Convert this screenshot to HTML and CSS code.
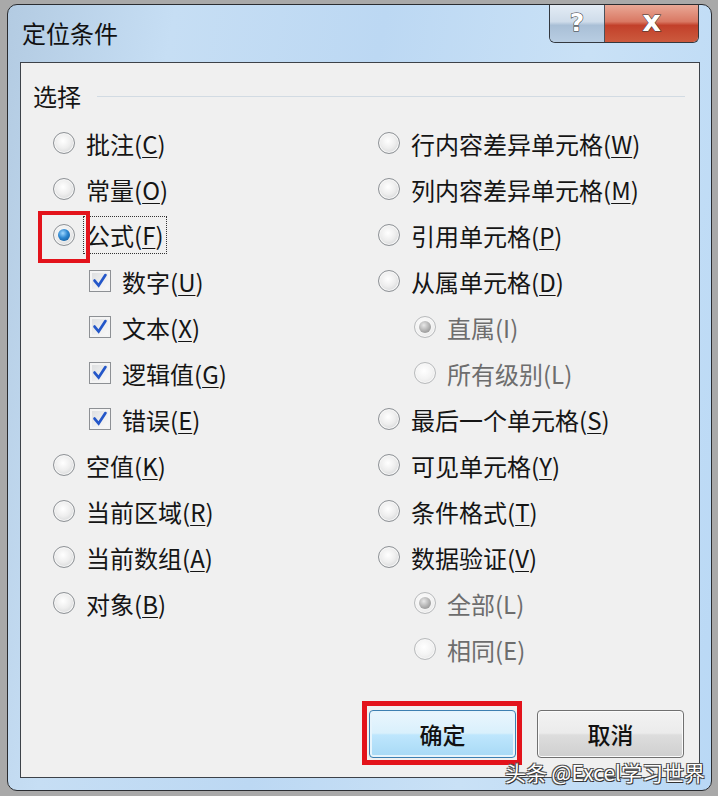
FILE: index.html
```html
<!DOCTYPE html>
<html lang="zh-CN">

	<head>
		<meta charset="UTF-8">
		<meta name="viewport" content="width=device-width, initial-scale=1.0">
		<title>定位条件</title>
		<link rel="stylesheet" href="styles.css">
	</head>

	<body>
		<div class="window">
			<div class="titlebar">
				<span class="title">定位条件</span>
				<div class="caption">
					<span class="cbtn help">?</span>
					<span class="cbtn close">x</span>
				</div>
			</div>
			<div class="content">
				<div class="group-head"><span>选择</span><i></i></div>
				<div class="cols">
					<ul class="col">
						<li><span class="radio"></span><label>批注(<u>C</u>)</label></li>
						<li><span class="radio"></span><label>常量(<u>O</u>)</label></li>
						<li><span class="radio on mark"></span><label class="focus">公式(<u>F</u>)</label></li>
						<li class="sub"><span class="check"><svg viewBox="0 0 22 22"><path d="M5 10.5 L9.5 16 L17 4.5" /></svg></span><label>数字(<u>U</u>)</label></li>
						<li class="sub"><span class="check"><svg viewBox="0 0 22 22"><path d="M5 10.5 L9.5 16 L17 4.5" /></svg></span><label>文本(<u>X</u>)</label></li>
						<li class="sub"><span class="check"><svg viewBox="0 0 22 22"><path d="M5 10.5 L9.5 16 L17 4.5" /></svg></span><label>逻辑值(<u>G</u>)</label></li>
						<li class="sub"><span class="check"><svg viewBox="0 0 22 22"><path d="M5 10.5 L9.5 16 L17 4.5" /></svg></span><label>错误(<u>E</u>)</label></li>
						<li><span class="radio"></span><label>空值(<u>K</u>)</label></li>
						<li><span class="radio"></span><label>当前区域(<u>R</u>)</label></li>
						<li><span class="radio"></span><label>当前数组(<u>A</u>)</label></li>
						<li><span class="radio"></span><label>对象(<u>B</u>)</label></li>
					</ul>
					<ul class="col">
						<li><span class="radio"></span><label>行内容差异单元格(<u>W</u>)</label></li>
						<li><span class="radio"></span><label>列内容差异单元格(<u>M</u>)</label></li>
						<li><span class="radio"></span><label>引用单元格(<u>P</u>)</label></li>
						<li><span class="radio"></span><label>从属单元格(<u>D</u>)</label></li>
						<li class="sub off"><span class="radio on"></span><label>直属(I)</label></li>
						<li class="sub off"><span class="radio"></span><label>所有级别(L)</label></li>
						<li><span class="radio"></span><label>最后一个单元格(<u>S</u>)</label></li>
						<li><span class="radio"></span><label>可见单元格(<u>Y</u>)</label></li>
						<li><span class="radio"></span><label>条件格式(<u>T</u>)</label></li>
						<li><span class="radio"></span><label>数据验证(<u>V</u>)</label></li>
						<li class="sub off"><span class="radio on"></span><label>全部(L)</label></li>
						<li class="sub off"><span class="radio"></span><label>相同(E)</label></li>
					</ul>
				</div>
				<div class="buttons">
					<a href="javascript:;" class="btn ok mark">确定</a>
					<a href="javascript:;" class="btn">取消</a>
				</div>
			</div>
			<div class="watermark">头条 @Excel学习世界</div>
		</div>
	</body>

</html>
```

FILE: styles.css
```css
* {
	margin: 0;
	padding: 0;
	list-style: none;
	box-sizing: border-box;
}

body {
	width: 718px;
	height: 796px;
	background: #a9a9a9;
	font-family: "Noto Sans CJK SC", "Noto Sans", sans-serif;
	color: #151515;
	overflow: hidden;
}

.window {
	position: relative;
	margin: 4px 0 0 7px;
	width: 705px;
	height: 787px;
	padding: 0 11px 12px 12px;
	border: 1px solid #2a2c30;
	border-radius: 10px;
	background: linear-gradient(100deg, #b3cbe2 0%, #c6def4 20%, #bcd8f3 45%, #c9e1f6 70%, #b9d8f5 100%);
	display: flex;
	flex-direction: column;
}

.titlebar {
	height: 57px;
	margin-left: -12px;
	padding-left: 14px;
	display: flex;
	justify-content: space-between;
}

.title {
	font-size: 24px;
	line-height: 56px;
	color: #111;
}

.caption {
	display: flex;
	height: 38px;
	border: 1px solid #33383f;
	border-top: 0;
	border-radius: 0 0 6px 6px;
	overflow: hidden;
	margin-right: 1px;
}

.cbtn {
	display: inline-block;
	height: 100%;
	text-align: center;
	font-family: "DejaVu Sans", sans-serif;
	font-weight: bold;
	color: #fff;
	-webkit-text-stroke: 1px #333;
	paint-order: stroke fill;
}

.help {
	width: 55px;
	font-size: 25px;
	line-height: 36px;
	background: linear-gradient(#e3ecf5 0%, #cfdcea 45%, #a9bfd6 55%, #b8cde2 100%);
	border-right: 1px solid #4a525c;
}

.close {
	width: 93px;
	font-size: 29px;
	line-height: 33px;
	background: linear-gradient(#e9a896 0%, #d97863 45%, #c2402a 55%, #cc5a3e 100%);
}

.content {
	flex: 1;
	display: flex;
	flex-direction: column;
	background: #f0f0f0;
	border: 1px solid #3d4249;
}

.group-head {
	display: flex;
	align-items: center;
	margin: 18px 14px 0 12px;
	font-size: 24px;
	line-height: 30px;
}

.group-head i {
	flex: 1;
	height: 1px;
	margin-left: 16px;
	background: #d2dbe3;
}

.cols {
	display: grid;
	grid-template-columns: 325px 1fr;
	padding-left: 32px;
	margin-top: 9px;
}

.col li {
	height: 46px;
	display: flex;
	align-items: center;
	gap: 11px;
	font-size: 24px;
	white-space: nowrap;
}

.col li.sub {
	padding-left: 36px;
}

.col li.off {
	color: #6d6d6d;
}

u {
	text-decoration-thickness: 1px;
	text-underline-offset: 3px;
}

.radio {
	position: relative;
	width: 22px;
	height: 22px;
	flex: none;
	border-radius: 50%;
	border: 1px solid #8e9296;
	background: radial-gradient(circle at 45% 40%, #ffffff 0%, #eeeeee 45%, #c9cbcd 100%);
	box-shadow: inset 0 0 0 1px #f7f7f7;
}

.radio.on::after {
	content: "";
	position: absolute;
	left: 4px;
	top: 4px;
	width: 12px;
	height: 12px;
	border-radius: 50%;
	background: radial-gradient(circle at 40% 35%, #9fd8ff 0%, #2c86d0 45%, #0b4f8c 100%);
}

.off .radio {
	border-color: #b8babc;
	background: radial-gradient(circle at 45% 40%, #fff 0%, #f3f3f3 50%, #dcdcdc 100%);
}

.off .radio.on::after {
	background: radial-gradient(circle at 40% 35%, #e8e8e8 0%, #a9a9a9 60%, #8a8a8a 100%);
}

.check {
	width: 22px;
	height: 22px;
	flex: none;
	border: 1px solid #8d9094;
	background: linear-gradient(135deg, #dadcde 0%, #f0f0f0 60%, #fafafa 100%);
	box-shadow: inset 0 0 0 2px #f4f4f4;
	display: flex;
}

.check svg {
	width: 100%;
	height: 100%;
}

.check path {
	fill: none;
	stroke: #2457c9;
	stroke-width: 3;
	stroke-linecap: round;
}

.focus {
	margin-left: -3px;
	padding: 0 2px;
	height: 38px;
	line-height: 36px;
	border: 1px dotted #333;
}

/* 红色标注框 */
.mark {
	position: relative;
}

.radio.mark::before {
	content: "";
	position: absolute;
	left: -16px;
	top: -14px;
	width: 44px;
	height: 44px;
	border: 4px solid #e3131b;
}

.buttons {
	margin-top: auto;
	display: flex;
	justify-content: flex-end;
	gap: 21px;
	padding: 0 15px 19px 0;
}

.btn {
	display: inline-block;
	width: 147px;
	height: 48px;
	line-height: 46px;
	text-align: center;
	font-size: 23px;
	font-weight: 500;
	color: #111;
	text-decoration: none;
	border: 1px solid #707070;
	border-radius: 4px;
	background: linear-gradient(#f3f3f3 0%, #ebebeb 48%, #dddddd 52%, #cfcfcf 100%);
	box-shadow: inset 0 0 0 1px #fbfbfb;
}

.btn.ok {
	border-color: #3c7fb1;
	background: linear-gradient(#eaf6fd 0%, #d9f0fc 48%, #bee6fd 52%, #a7d9f5 100%);
	box-shadow: inset 0 0 0 2px #e6f4fc;
}

.btn.mark::before {
	content: "";
	position: absolute;
	left: -8px;
	top: -10px;
	right: -7px;
	bottom: -8px;
	border: 5px solid #e3131b;
}

.watermark {
	position: absolute;
	right: 6px;
	bottom: 5px;
	font-size: 21px;
	line-height: 26px;
	color: #fff;
	text-shadow: 1px 1px 0 #333, -1px -1px 0 #555, 1px -1px 0 #555, -1px 1px 0 #555;
}
```
